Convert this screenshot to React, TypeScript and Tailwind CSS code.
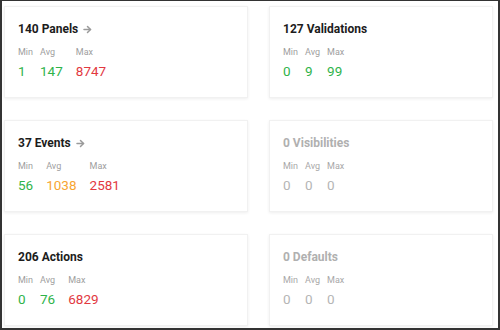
import { ReactNode } from "react";

type Tone = "green" | "orange" | "red" | "muted";

interface Stat {
    value: number
    tone: Tone
}

interface CardData {
    title: string
    link?: boolean
    empty?: boolean
    min: Stat
    avg: Stat
    max: Stat
}

const toneClass: Record<Tone, string> = {
    green: "text-[#2fb34a]",
    orange: "text-[#f7a532]",
    red: "text-[#e2393f]",
    muted: "text-[#b5b5b5]",
};

const cards: CardData[] = [
    { title: "140 Panels", link: true, min: { value: 1, tone: "green" }, avg: { value: 147, tone: "green" }, max: { value: 8747, tone: "red" } },
    { title: "127 Validations", min: { value: 0, tone: "green" }, avg: { value: 9, tone: "green" }, max: { value: 99, tone: "green" } },
    { title: "37 Events", link: true, min: { value: 56, tone: "green" }, avg: { value: 1038, tone: "orange" }, max: { value: 2581, tone: "red" } },
    { title: "0 Visibilities", empty: true, min: { value: 0, tone: "muted" }, avg: { value: 0, tone: "muted" }, max: { value: 0, tone: "muted" } },
    { title: "206 Actions", min: { value: 0, tone: "green" }, avg: { value: 76, tone: "green" }, max: { value: 6829, tone: "red" } },
    { title: "0 Defaults", empty: true, min: { value: 0, tone: "muted" }, avg: { value: 0, tone: "muted" }, max: { value: 0, tone: "muted" } },
];

function Arrow() {
    return (
        <svg width="9" height="9" viewBox="0 0 9 9" className="ml-[5px] mt-[1px]" fill="none" stroke="#9a9a9a" strokeWidth="1.5" strokeLinecap="round" strokeLinejoin="round">
            <path d="M1 4.5h6.5" />
            <path d="M4.5 1.5l3 3-3 3" />
        </svg>
    );
}

function Column({ label, stat, muted }: { label: string; stat: Stat; muted?: boolean }) {
    return (
        <div className="flex flex-col">
            <span className={`text-[9px] leading-[12px] ${muted ? "text-[#a8a8a8]" : "text-[#9e9e9e]"}`}>{label}</span>
            <span className={`mt-[4px] pr-[6px] text-[13.5px] leading-[18px] ${toneClass[stat.tone]}`}>{stat.value}</span>
        </div>
    );
}

function StatCard({ data }: { data: CardData }): ReactNode {
    return (
        <div className="h-[92px] bg-white border border-[#f1f1f1] shadow-[0_1px_3px_rgba(0,0,0,0.07)] pl-[13px] pt-[14px]">
            <div className="flex items-center h-[16px]">
                <span className={`text-[12px] leading-[16px] font-bold ${data.empty ? "text-[#b0b0b0]" : "text-[#1c1c1c]"}`}>
                    {data.title}
                </span>
                {data.link && <Arrow />}
            </div>
            <div className="mt-[9px] flex gap-[7px]">
                <Column label="Min" stat={data.min} muted={data.empty} />
                <Column label="Avg" stat={data.avg} muted={data.empty} />
                <Column label="Max" stat={data.max} muted={data.empty} />
            </div>
        </div>
    );
}

export default function App() {
    return (
        <div className="w-[500px] h-[330px] bg-white border-[#333333] border-l-2 border-t border-r-2 border-b-2 overflow-hidden font-['Roboto','Liberation_Sans',sans-serif]">
            <div className="grid grid-cols-[244px_224px] gap-x-[21px] gap-y-[22px] pl-[2px] pt-[5px]">
                {cards.map((c) => (
                    <StatCard key={c.title} data={c} />
                ))}
            </div>
        </div>
    );
}
